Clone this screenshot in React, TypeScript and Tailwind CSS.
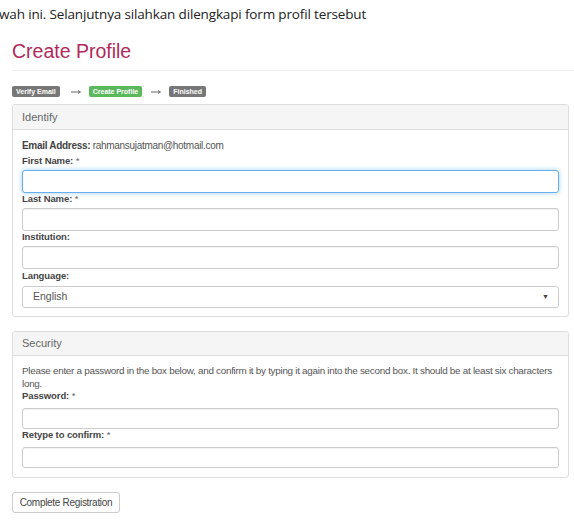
import React from "react";

const arial = { fontFamily: '"Liberation Sans", Arial, sans-serif' };

function Label({ text, req, cls }: { text: string; req?: boolean; cls?: string }) {
  return (
    <div className={`text-[9.5px] leading-[12px] font-bold text-[#444] tracking-[-0.1px] ${cls ?? ""}`}>
      {text}
      {req && <span className="font-normal text-[#666]"> *</span>}
    </div>
  );
}

function Input({ focused, h }: { focused?: boolean; h?: string }) {
  return (
    <div
      className={
        focused
          ? `${h ?? "h-[23px]"} rounded-[3px] border border-[#66afe9] bg-white shadow-[0_0_5px_rgba(102,175,233,0.6)]`
          : `${h ?? "h-[23px]"} rounded-[3px] border border-[#ccc] bg-white shadow-[inset_0_1px_1px_rgba(0,0,0,0.05)]`
      }
    />
  );
}

function Badge({ text, green }: { text: string; green?: boolean }) {
  return (
    <span
      className={`inline-flex items-center h-[11px] px-[4px] rounded-[2px] text-[7px] font-bold text-white leading-none ${green ? "bg-[#5cb85c]" : "bg-[#777]"}`}
    >
      {text}
    </span>
  );
}

function Arrow() {
  return (
    <svg width="10" height="6" viewBox="0 0 10 6" className="block">
      <line x1="0" y1="3" x2="9" y2="3" stroke="#555" strokeWidth="0.9" />
      <path d="M7 1.5 L9.6 3 L7 4.5" fill="none" stroke="#555" strokeWidth="0.8" />
    </svg>
  );
}

export default function App() {
  return (
    <div className="w-[574px] h-[524px] bg-white overflow-hidden relative">
      <div
        className="text-[13.5px] leading-[20px] text-[#222] pt-[4px] whitespace-nowrap"
        style={{ fontFamily: '"Open Sans", "Noto Sans", sans-serif' }}
      >
        <span className="ml-[-1px] tracking-[-0.15px]">wah ini. Selanjutnya silahkan dilengkapi form profil tersebut</span>
      </div>
      <div className="pl-[12px]" style={arial}>
        <div className="mt-[14px] text-[19.5px] leading-[26px] text-[#b02a5a] font-normal">Create Profile</div>
        <div className="mt-[6px] h-px bg-[#eee]" />
        <div className="mt-[15px] flex items-center h-[11px]">
          <Badge text="Verify Email" />
          <span className="ml-[11px] mr-[8px]"><Arrow /></span>
          <Badge text="Create Profile" green />
          <span className="ml-[9px] mr-[8px]"><Arrow /></span>
          <Badge text="Finished" />
        </div>

        {/* Identify panel */}
        <div className="mt-[7px] w-[557px] rounded-[3px] border border-[#ddd] overflow-hidden">
          <div className="h-[25px] bg-[#f5f5f5] border-b border-[#ddd] flex items-center px-[9px] text-[11px] text-[#666]">
            Identify
          </div>
          <div className="px-[9px] pt-[9px] pb-[8px]">
            <div className="text-[10px] leading-[14px] text-[#555] tracking-[-0.3px]">
              <span className="font-bold text-[#444]">Email Address:</span> rahmansujatman@hotmail.com
            </div>
            <Label text="First Name:" req cls="mt-[2px] mb-[3px]" />
            <Input focused />
            <Label text="Last Name:" req cls="mb-[3px]" />
            <Input />
            <Label text="Institution:" cls="mb-[3px]" />
            <Input />
            <Label text="Language:" cls="mt-[1px] mb-[4px]" />
            <div className="h-[22px] rounded-[3px] border border-[#ccc] bg-white flex items-center justify-between pl-[10px] pr-[9px] text-[10.5px] text-[#555]">
              <span>English</span>
              <span className="text-[7px] text-[#444]">▼</span>
            </div>
          </div>
        </div>

        {/* Security panel */}
        <div className="mt-[14px] w-[557px] rounded-[3px] border border-[#ddd] overflow-hidden">
          <div className="h-[24px] bg-[#f5f5f5] border-b border-[#ddd] flex items-center px-[9px] text-[11px] text-[#666]">
            Security
          </div>
          <div className="px-[9px] pt-[8px] pb-[9px]">
            <div className="text-[9.9px] leading-[13px] text-[#555] tracking-[-0.28px]">
              Please enter a password in the box below, and confirm it by typing it again into the second box. It should be at least six characters long.
            </div>
            <Label text="Password:" req cls="mb-[6px]" />
            <Input h="h-[21px]" />
            <Label text="Retype to confirm:" req cls="mb-[6px]" />
            <Input h="h-[21px]" />
          </div>
        </div>

        <button className="mt-[14px] h-[21px] w-[108px] rounded-[3px] border border-[#ccc] bg-white text-[10px] tracking-[-0.3px] text-[#444] flex items-center justify-center">
          Complete Registration
        </button>
      </div>
    </div>
  );
}
